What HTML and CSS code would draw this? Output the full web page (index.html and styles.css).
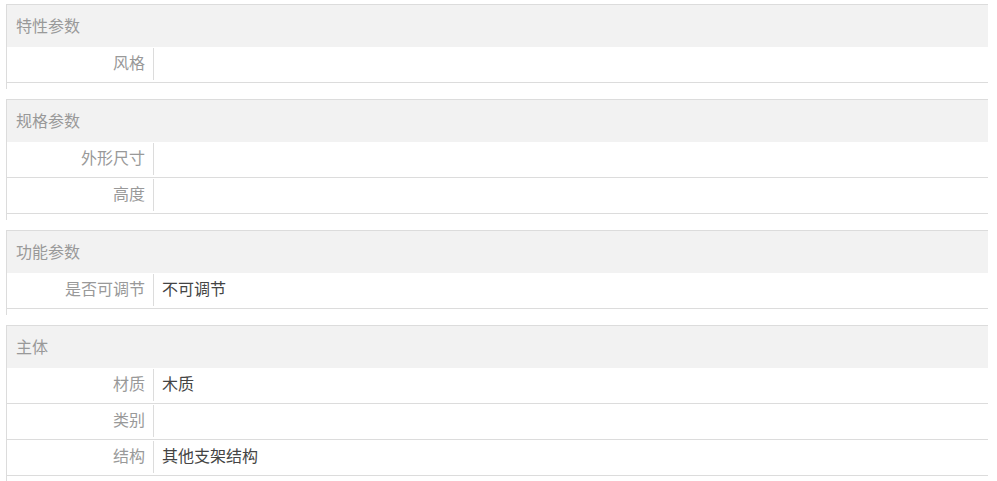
FILE: index.html
```html
<!DOCTYPE html>
<html lang="zh-CN">
<head>
<meta charset="utf-8">
<title>参数</title>
<link rel="stylesheet" href="styles.css">
</head>
<body>
<div class="page">
  <section class="group">
    <div class="group-title">特性参数</div>
    <div class="row"><div class="label">风格</div><div class="value"></div></div>
  </section>
  <section class="group">
    <div class="group-title">规格参数</div>
    <div class="row"><div class="label">外形尺寸</div><div class="value"></div></div>
    <div class="row"><div class="label">高度</div><div class="value"></div></div>
  </section>
  <section class="group">
    <div class="group-title">功能参数</div>
    <div class="row"><div class="label">是否可调节</div><div class="value">不可调节</div></div>
  </section>
  <section class="group">
    <div class="group-title">主体</div>
    <div class="row"><div class="label">材质</div><div class="value">木质</div></div>
    <div class="row"><div class="label">类别</div><div class="value"></div></div>
    <div class="row"><div class="label">结构</div><div class="value">其他支架结构</div></div>
  </section>
</div>
</body>
</html>
```
FILE: styles.css
```css
html, body {
  margin: 0;
  padding: 0;
  background: #fff;
}
body {
  font-family: "Noto Sans CJK SC", "Microsoft YaHei", sans-serif;
  font-size: 16px;
  color: #333;
}
.page {
  padding: 4px 9px 0 6px;
}
.group {
  border-top: 1px solid #dcdcdc;
  border-left: 1px solid #dcdcdc;
  padding-bottom: 6px;
  margin-bottom: 10px;
}
.group-title {
  height: 42px;
  line-height: 40px;
  padding-bottom: 2px;
  box-sizing: border-box;
  background: #f2f2f2;
  padding-left: 9px;
  color: #999;
  font-size: 16px;
}
.row {
  display: flex;
  height: 35px;
  border-bottom: 1px solid #dcdcdc;
  align-items: stretch;
}
.label {
  width: 138px;
  flex: none;
  margin: 1px 0 2px;
  padding-right: 8px;
  padding-bottom: 3px;
  border-right: 1px solid #dcdcdc;
  text-align: right;
  line-height: 29px;
  color: #999;
  font-size: 16px;
}
.value {
  flex: 1;
  padding-left: 8px;
  line-height: 30px;
  padding-bottom: 5px;
  color: #444;
  font-size: 16px;
}
```
